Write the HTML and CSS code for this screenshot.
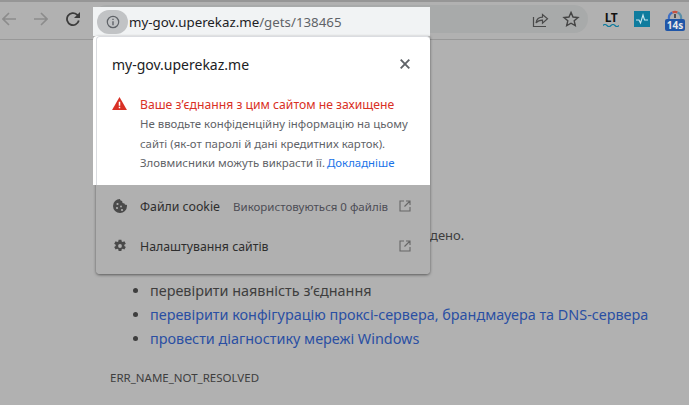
FILE: index.html
```html
<!DOCTYPE html>
<html lang="uk">

<head>
    <meta http-equiv="Content-Type" content="text/html;charset=UTF-8">
    <meta name="viewport" content="width=device-width, initial-scale=1.0">
    <title>my-gov.uperekaz.me</title>
    <link rel="stylesheet" href="styles.css">
</head>

<body>
    <div class="tabstrip"></div>

    <header class="toolbar">
        <svg class="nav-icon nav-off" viewBox="0 0 14 14"><path d="M14 7H1M7 1 1 7l6 6"/></svg>
        <svg class="nav-icon nav-off" viewBox="0 0 14 14"><path d="M0 7h13M7 1l6 6-6 6"/></svg>
        <svg class="nav-icon nav-reload" viewBox="0 0 14 14"><path d="M12.800 8.600A6 6 0 1 1 11 2.600L12.500 4.200"/><path class="solid" d="M14 0v6H8z"/></svg>

        <div class="omnibox">
            <span class="omnibox-spacer"></span>
            <svg class="omni-icon" viewBox="0 0 18 18"><path d="M2.500 7v9.500h12.500"/><path d="M5 13c.6-3.600 3-5.800 6.500-5.800V4.500L16.500 8.800l-5 4.300v-3c-2.800 0-5 .9-6.500 2.900z"/></svg>
            <svg class="omni-icon omni-star" viewBox="0 0 18 18"><path d="m9 2.400 2 4.600 5 .5-3.800 3.300 1.100 4.900L9 13.200l-4.300 2.500 1.100-4.900L2 7.500l5-.5z"/></svg>
        </div>

        <div class="extensions">
            <div class="ext-lt">
                <span class="ext-lt-text">LT</span>
                <svg class="ext-wave" viewBox="0 0 16 3"><path d="M0 1.500c1.300-1.400 2.700-1.400 4 0s2.700 1.400 4 0 2.700-1.400 4 0 2.700 1.400 4 0" fill="none" stroke="#0f7c9e" stroke-width="1.200"/></svg>
            </div>
            <svg class="ext-pulse" viewBox="0 0 16 16"><rect width="16" height="16" fill="#0f7c9e"/><path d="M2 9h3l1.500 3L9 4l1.500 5H14" fill="none" stroke="#c9e6ef" stroke-width="1.100"/></svg>
            <div class="ext-speed">
                <svg class="ext-gauge" viewBox="0 0 16 11"><path d="M2 11a6 6 0 0 1 3.500-6.500" fill="none" stroke="#3f6fc4" stroke-width="2.200"/><path d="M5.500 4.500a6 6 0 0 1 5 0" fill="none" stroke="#c9513f" stroke-width="2.200"/><path d="M10.500 4.500A6 6 0 0 1 14 11" fill="none" stroke="#5b8fa8" stroke-width="2.200"/><path d="M8 6v4" stroke="#333" stroke-width="1.500"/></svg>
                <span class="ext-badge">14s</span>
            </div>
        </div>
    </header>

    <main class="page">
        <p class="page-text">дено.</p>
        <ul class="page-list">
            <li>перевірити наявність з’єднання</li>
            <li><a href="#">перевірити конфігурацію проксі-сервера, брандмауера та DNS-сервера</a></li>
            <li><a href="#">провести діагностику мережі Windows</a></li>
        </ul>
        <div class="page-code">ERR_NAME_NOT_RESOLVED</div>
    </main>

    <!-- lit part of the omnibox, above the dimmed window -->
    <div class="omni-lit">
        <span class="info-pill">
            <svg class="info-icon" viewBox="0 0 16 16"><circle cx="8" cy="8" r="6.500" fill="none" stroke="#5f6368" stroke-width="1.400"/><path d="M7.200 7h1.600v4.800H7.200zM7.200 4.200h1.600v1.600H7.200z" fill="#5f6368"/></svg>
        </span>
        <span class="url">my-gov.uperekaz.me<span class="url-path">/gets/138465</span></span>
    </div>

    <section class="popup">
        <div class="popup-top">
            <div class="popup-head">
                <span class="popup-host">my-gov.uperekaz.me</span>
                <svg class="popup-close" viewBox="0 0 10 10"><path d="m.7.7 8.600 8.600M9.300.7.7 9.300"/></svg>
            </div>
            <div class="warn">
                <svg class="warn-icon" viewBox="0 0 16 14"><path d="M8 0 16 14H0z" fill="#d93025"/><path d="M7.200 5h1.600v4.400H7.200zM7.200 10.400h1.600V12H7.200z" fill="#fff"/></svg>
                <div class="warn-body">
                    <div class="warn-title">Ваше з’єднання з цим сайтом не захищене</div>
                    <p class="warn-text">Не вводьте конфіденційну інформацію на цьому сайті (як-от паролі й дані кредитних карток).</p>
                    <p class="warn-text warn-last"><span>Зловмисники можуть викрасти її.</span><a href="#">Докладніше</a></p>
                </div>
            </div>
        </div>
        <div class="popup-rows">
            <div class="popup-row">
                <svg class="row-icon" viewBox="0 0 14 14"><path d="M7 0a7 7 0 1 0 7 7c0-.5 0-.9-.1-1.200-1.300.3-2.300-.3-2.600-1.500C9.900 4.500 9 3.500 9.200 2 7.900 2 7 1.200 7 0z" fill="#4a4a4a"/><circle cx="4.500" cy="5" r="1.100" fill="#b0b0b0"/><circle cx="4" cy="9" r="1.100" fill="#b0b0b0"/><circle cx="8" cy="7.500" r=".9" fill="#b0b0b0"/><circle cx="9" cy="11" r="1.100" fill="#b0b0b0"/></svg>
                <span class="row-label">Файли cookie</span>
                <span class="row-note">Використовуються 0 файлів</span>
                <svg class="row-open" viewBox="0 0 12 12"><path d="M5 1H1v10h10V7M7 1h4v4M11 1 5.500 6.500"/></svg>
            </div>
            <div class="popup-row">
                <svg class="row-icon" viewBox="0 0 14 14"><path d="M5.600.8h2.800l.3 1.800 1 .5 1.700-.8 1.400 2.400-1.500 1.100v1.200l1.500 1.100-1.400 2.400-1.700-.8-1 .5-.3 1.800H5.600l-.3-1.800-1-.5-1.700.8-1.400-2.400 1.500-1.100V5.800L1.200 4.700l1.400-2.400 1.700.8 1-.5z" fill="#4a4a4a"/><circle cx="7" cy="7" r="1.900" fill="#b0b0b0"/></svg>
                <span class="row-label">Налаштування сайтів</span>
                <svg class="row-open" viewBox="0 0 12 12"><path d="M5 1H1v10h10V7M7 1h4v4M11 1 5.500 6.500"/></svg>
            </div>
        </div>
    </section>
</body>

</html>
```

FILE: styles.css
```css
body {
    margin: 0;
    height: 405px;
    overflow: hidden;
    position: relative;
    background-color: #b1b1b1;
    color: #3e3e3e;
    font-family: "Noto Sans", sans-serif;
}

.tabstrip {
    height: 2px;
    background-color: #969696;
}

.toolbar {
    display: flex;
    align-items: center;
    height: 38px;
    box-sizing: border-box;
    padding: 0 0 3px 2px;
    border-bottom: 1px solid #989898;
}

.nav-icon {
    width: 14px;
    height: 14px;
    fill: none;
    stroke-width: 1.600;
    margin-right: 18px;
}

.nav-off {
    stroke: #8c8c8c;
}

.nav-reload {
    stroke: #3c3c3c;
    margin-right: 13px;
    stroke-width: 1.800;
}

.nav-reload .solid {
    fill: #3c3c3c;
    stroke: none;
}

.omnibox {
    display: flex;
    align-items: center;
    gap: 13px;
    width: 495px;
    height: 28px;
    box-sizing: border-box;
    padding-right: 8px;
    border-radius: 14px;
    background-color: #a8aaaa;
}

.omnibox-spacer {
    flex: 1;
}

.omni-icon {
    width: 18px;
    height: 18px;
    fill: none;
    stroke: #4a4a4a;
    stroke-width: 1.200;
}

.omni-star {
    stroke: #444444;
    stroke-width: 1.400;
}

.extensions {
    display: flex;
    align-items: center;
    gap: 15px;
    margin-left: 15px;
}

.ext-lt {
    display: flex;
    flex-direction: column;
    align-items: center;
    width: 16px;
}

.ext-lt-text {
    font-size: 12px;
    font-weight: 700;
    line-height: 11px;
    letter-spacing: -0.500px;
    color: #111111;
}

.ext-wave {
    width: 16px;
    height: 3px;
    margin-top: 1px;
}

.ext-pulse {
    width: 16px;
    height: 16px;
}

.ext-speed {
    display: flex;
    flex-direction: column;
    align-items: center;
    width: 20px;
    margin-top: 1px;
}

.ext-gauge {
    width: 16px;
    height: 11px;
}

.ext-badge {
    width: 20px;
    height: 12px;
    border-radius: 2px;
    background-color: #1f56a8;
    color: #e8e8e8;
    font-size: 10px;
    font-weight: 700;
    line-height: 12px;
    text-align: center;
}

.page {
    padding: 185px 0 0 110px;
    font-size: 14.400px;
}

.page-text {
    margin: 0 0 34px 320px;
    font-size: 13px;
    line-height: 20px;
    white-space: nowrap;
}

.page-list {
    margin: 0 0 19px;
    padding-left: 40px;
    line-height: 24px;
}

.page-list a {
    color: #2a4fa3;
    text-decoration: none;
}

.page-code {
    font-size: 11.500px;
    line-height: 16px;
}

.omni-lit {
    position: absolute;
    left: 93px;
    top: 7px;
    width: 337px;
    height: 29px;
    display: flex;
    align-items: center;
    gap: 1px;
    box-sizing: border-box;
    padding-left: 4px;
    background-color: #f1f3f4;
    font-size: 13.300px;
}

.info-pill {
    display: flex;
    justify-content: center;
    align-items: center;
    width: 31px;
    height: 24px;
    border-radius: 12px;
    background-color: #c1c3c5;
}

.info-icon {
    width: 14px;
    height: 14px;
}

.url {
    color: #202124;
    white-space: nowrap;
}

.url-path {
    color: #5f6368;
}

.popup {
    position: absolute;
    left: 96px;
    top: 36px;
    width: 334px;
    height: 238px;
    border-radius: 0 0 4px 4px;
    box-shadow: 0 1px 3px rgba(0, 0, 0, 0.5);
}

.popup-top {
    height: 149px;
    box-sizing: border-box;
    padding: 15px 16px 0 15px;
    background-color: #ffffff;
    border-top: 1px solid #dadce0;
    border-left: 1px solid #dadce0;
    border-radius: 4px 4px 0 0;
    box-shadow: -3px 0 0 #ffffff;
}

.popup-head {
    display: flex;
    justify-content: space-between;
    align-items: center;
    height: 24px;
    padding-right: 4px;
    margin-bottom: 20px;
}

.popup-host {
    font-size: 14px;
    color: #202124;
}

.popup-close {
    width: 10px;
    height: 10px;
    fill: none;
    stroke: #5f6368;
    stroke-width: 1.900;
}

.warn {
    display: flex;
    gap: 13px;
}

.warn-icon {
    width: 15px;
    height: 13px;
    margin-top: 1px;
    flex-shrink: 0;
}

.warn-title {
    font-size: 12.200px;
    line-height: 18px;
    color: #d93025;
    white-space: nowrap;
}

.warn-text {
    margin: 0;
    width: 278px;
    font-size: 11.400px;
    line-height: 19.500px;
    color: #5f6368;
}

.warn-last {
    display: flex;
    gap: 2px;
    white-space: nowrap;
}

.warn-text a {
    color: #1a73e8;
    text-decoration: none;
}

.popup-rows {
    background-color: #b0b0b0;
    height: 89px;
    box-sizing: border-box;
    padding-top: 1px;
    border-radius: 0 0 4px 4px;
}

.popup-row {
    display: flex;
    align-items: center;
    height: 40px;
    padding: 0 19px 0 17px;
}

.row-icon {
    width: 14px;
    height: 14px;
    margin-right: 13px;
}

.row-label {
    font-size: 12.300px;
    color: #2e2e2e;
}

.row-note {
    margin-left: 13px;
    font-size: 11.500px;
    color: #4d4d55;
    white-space: nowrap;
}

.row-open {
    width: 12px;
    height: 12px;
    margin-left: auto;
    fill: none;
    stroke: #666666;
    stroke-width: 1.100;
}
```
